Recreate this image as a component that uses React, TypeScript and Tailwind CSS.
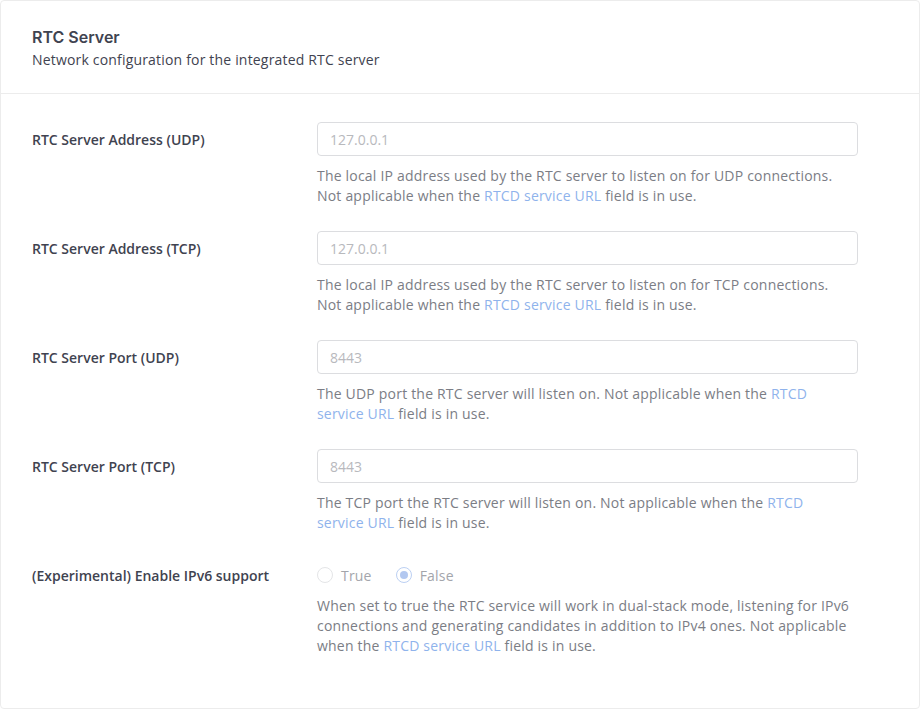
import React from "react";

const Link = ({ children }: { children: React.ReactNode }) => (
  <span className="text-[#8fb3ec]">{children}</span>
);

const rows: { label: string; placeholder: string; help: React.ReactNode }[] = [
  {
    label: "RTC Server Address (UDP)",
    placeholder: "127.0.0.1",
    help: (
      <>
        The local IP address used by the RTC server to listen on for UDP connections.
        <br />
        Not applicable when the <Link>RTCD service URL</Link> field is in use.
      </>
    ),
  },
  {
    label: "RTC Server Address (TCP)",
    placeholder: "127.0.0.1",
    help: (
      <>
        The local IP address used by the RTC server to listen on for TCP connections.
        <br />
        Not applicable when the <Link>RTCD service URL</Link> field is in use.
      </>
    ),
  },
  {
    label: "RTC Server Port (UDP)",
    placeholder: "8443",
    help: (
      <>
        The UDP port the RTC server will listen on. Not applicable when the <Link>RTCD service URL</Link> field is in use.
      </>
    ),
  },
  {
    label: "RTC Server Port (TCP)",
    placeholder: "8443",
    help: (
      <>
        The TCP port the RTC server will listen on. Not applicable when the <Link>RTCD service URL</Link> field is in use.
      </>
    ),
  },
];

export default function App() {
  return (
    <div className="w-[920px] h-[709px] bg-white" style={{ fontFamily: '"Open Sans", sans-serif' }}>
      <div className="h-[709px] rounded-[4px] border border-[#ececec] bg-white overflow-hidden">
        <div className="px-[31px] pt-[24px] pb-[23px] border-b border-[#ececec]">
          <div className="text-[16px] leading-[24px] font-semibold text-[#3f4350]" style={{ fontFamily: '"Inter", sans-serif' }}>
            RTC Server
          </div>
          <div className="mt-[1px] text-[14px] leading-[20px] tracking-[0.18px] text-[#3f4350]">
            Network configuration for the integrated RTC server
          </div>
        </div>
        <div className="px-[31px] pt-[28px]">
          {rows.map((r) => (
            <div key={r.label} className="flex mb-[25px]">
              <div className="w-[285px] shrink-0 h-[34px] flex items-center text-[14px] font-semibold text-[#3f4350]">
                {r.label}
              </div>
              <div className="w-[541px]">
                <div className="h-[34px] rounded-[4px] border border-[#dcdde0] flex items-center px-[12px] text-[14px] text-[#b8b9bd]">
                  {r.placeholder}
                </div>
                <div className="mt-[10px] w-[530px] text-[14px] leading-[20px] tracking-[0.2px] text-[#7b7d85]">{r.help}</div>
              </div>
            </div>
          ))}
          <div className="flex">
            <div className="w-[285px] shrink-0 h-[34px] flex items-center text-[14px] font-semibold text-[#3f4350]">
              (Experimental) Enable IPv6 support
            </div>
            <div className="w-[541px]">
              <div className="h-[34px] flex items-center text-[14px] tracking-[0.2px] text-[#a3a5ab]">
                <div className="flex items-center">
                  <span className="w-[16px] h-[16px] rounded-full border border-[#e4e5e7] bg-white" />
                  <span className="ml-[8px]">True</span>
                </div>
                <div className="flex items-center ml-[24px]">
                  <span className="w-[16px] h-[16px] rounded-full border border-[#bcd0f3] bg-white flex items-center justify-center">
                    <span className="w-[8px] h-[8px] rounded-full bg-[#b3c8f0]" />
                  </span>
                  <span className="ml-[8px]">False</span>
                </div>
              </div>
              <div className="mt-[4px] w-[541px] text-[14px] leading-[20px] tracking-[0.2px] text-[#7b7d85]">
                When set to true the RTC service will work in dual-stack mode, listening for IPv6 connections and generating candidates in addition to IPv4 ones. Not applicable when the <Link>RTCD service URL</Link> field is in use.
              </div>
            </div>
          </div>
        </div>
      </div>
    </div>
  );
}
